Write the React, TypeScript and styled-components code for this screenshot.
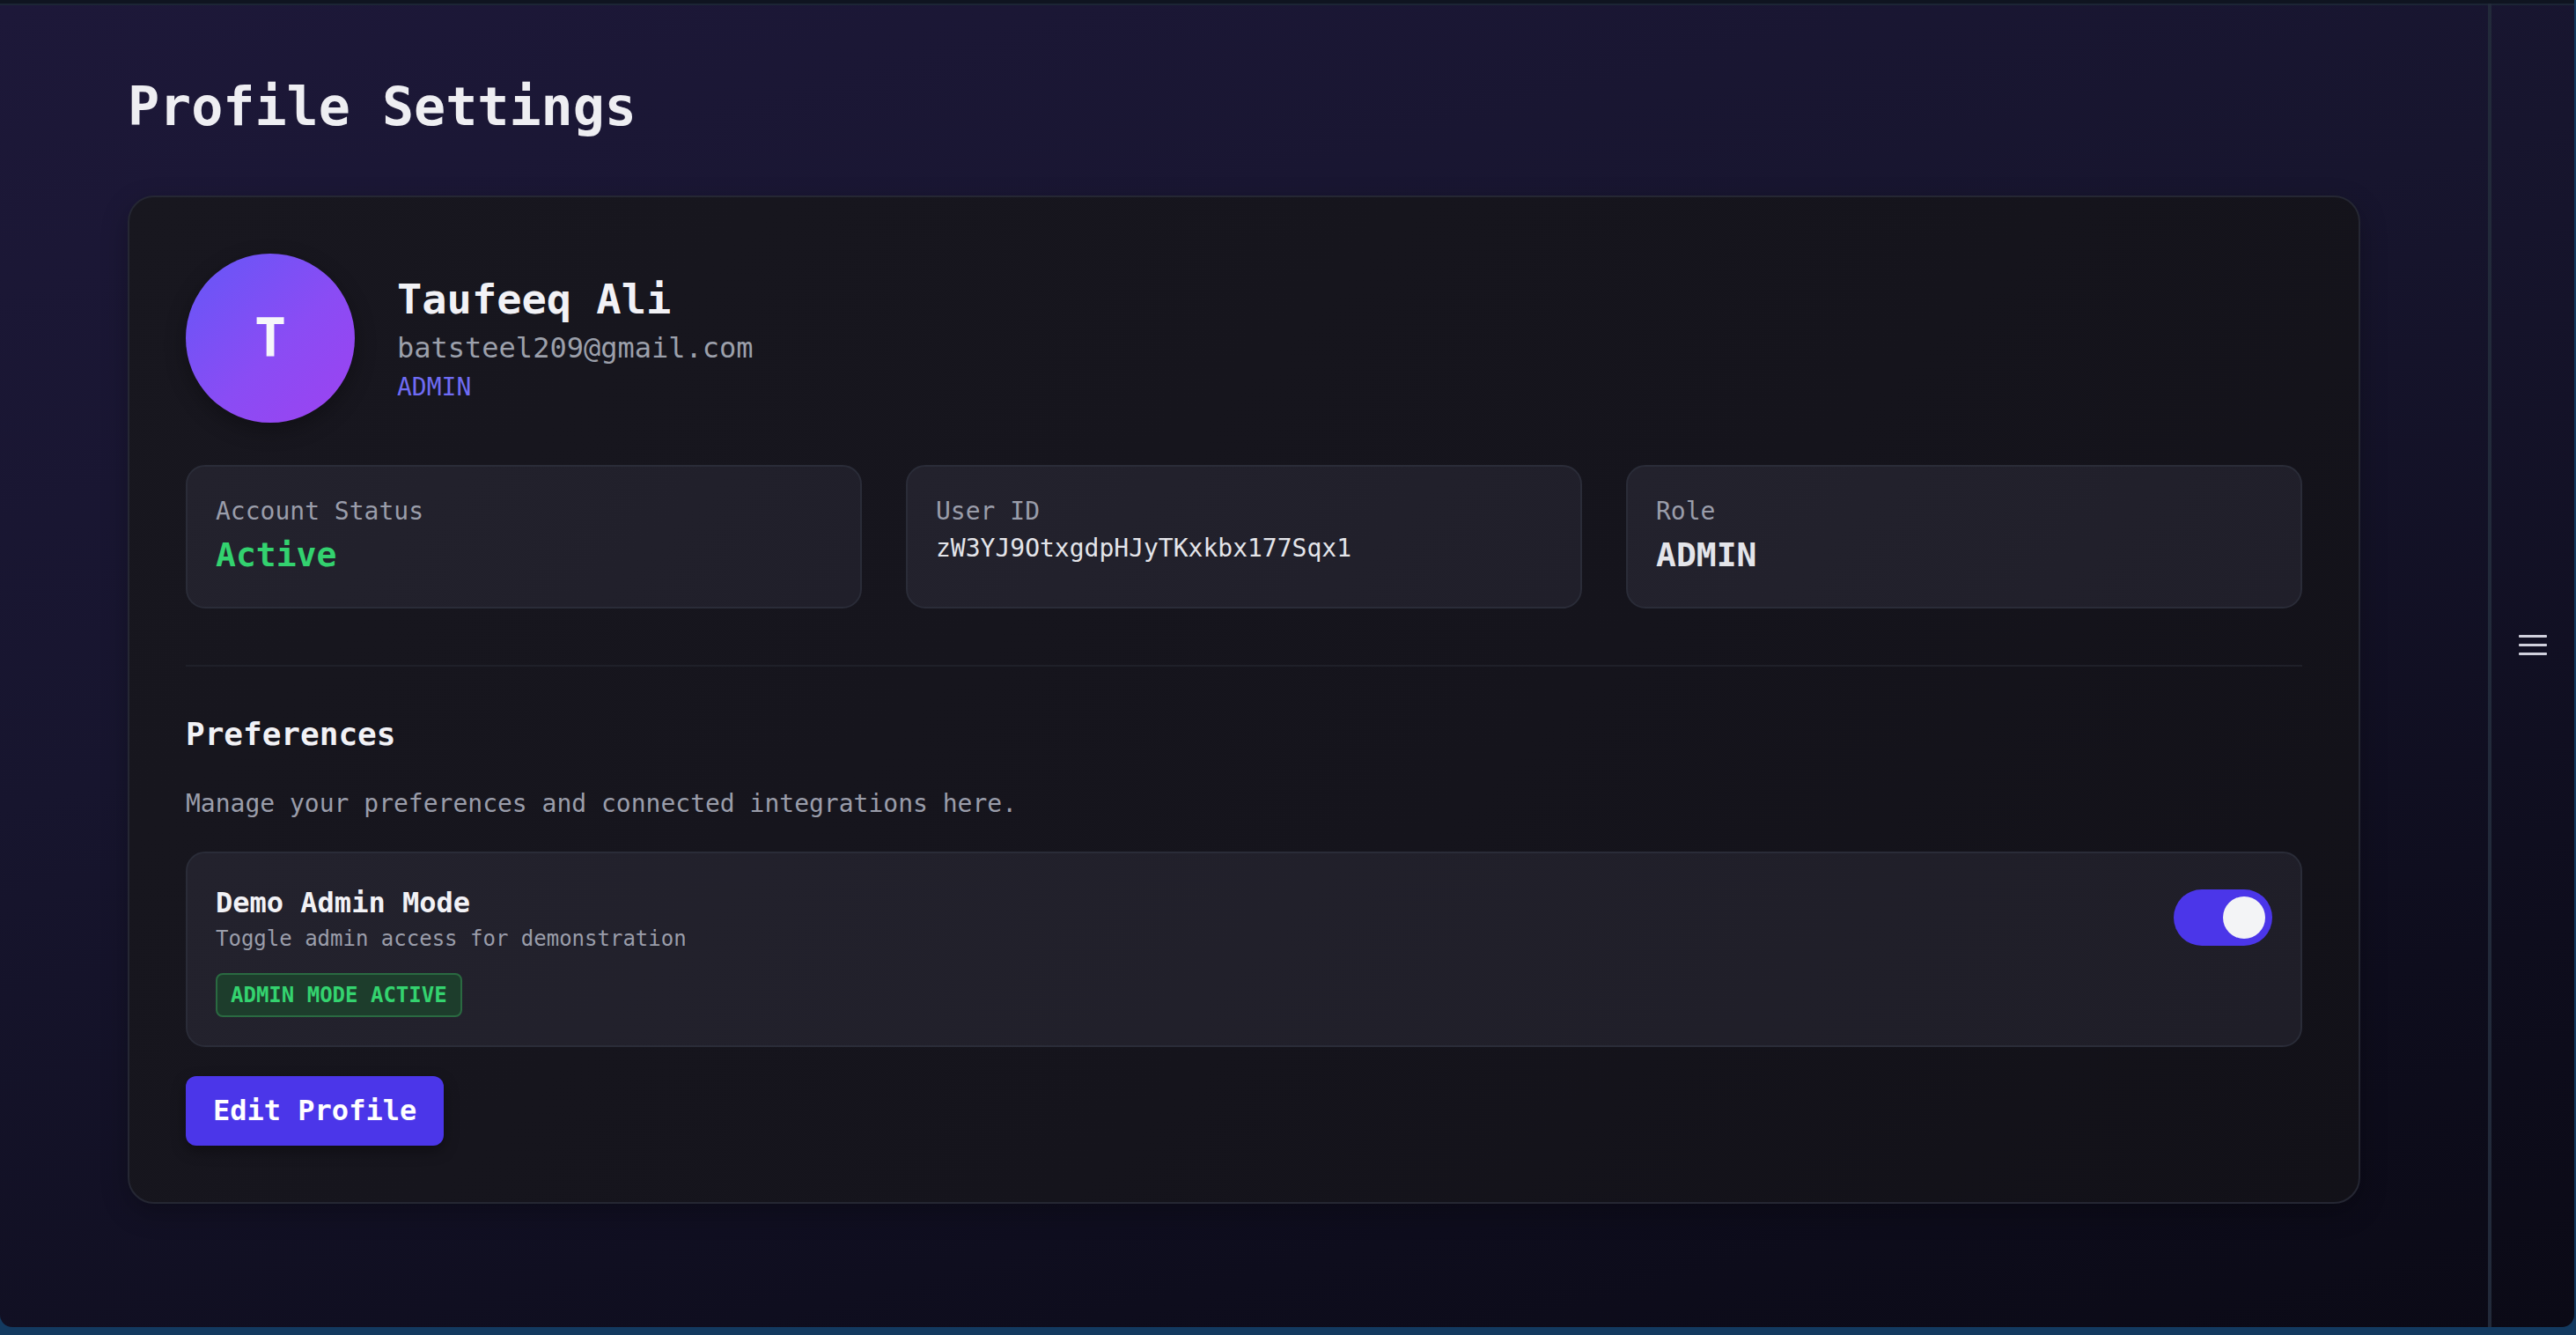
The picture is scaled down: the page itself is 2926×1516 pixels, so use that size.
import React, { useState } from 'react'
import styled, { createGlobalStyle } from 'styled-components'

const GlobalStyle = createGlobalStyle`
  html, body {
    margin: 0;
    padding: 0;
    background: #133a60;
  }
  body {
    font-family: "DejaVu Sans Mono", "Liberation Mono", monospace;
    color: #e5e7eb;
  }
  * {
    box-sizing: border-box;
  }
`

const Shell = styled.div`
  display: flex;
  width: calc(100% - 2px);
  height: 1507px;
  border-top: 4px solid #0f1420;
  border-radius: 0 0 14px 14px;
  overflow: hidden;
  background: linear-gradient(165deg, #1d1839 0%, #17152e 40%, #0e0d1d 80%, #0b0a16 100%);
  box-shadow: inset 0 2px 0 #1c2535;
`

const Main = styled.main`
  flex: 1;
  padding: 81px 145px 0;
`

const PageTitle = styled.h1`
  margin: 0 0 65px;
  font-size: 60px;
  line-height: 1.2;
  font-weight: 700;
  color: #eeeef2;
`

const Card = styled.section`
  padding: 64px;
  border: 2px solid #252733;
  border-radius: 30px;
  background: linear-gradient(135deg, #18171f 0%, #15141c 60%, #121118 100%);
  box-shadow: 0 10px 30px rgba(0, 0, 0, 0.25);
`

const ProfileHeader = styled.div`
  display: flex;
  align-items: center;
  gap: 48px;
`

const Avatar = styled.div`
  width: 192px;
  height: 192px;
  border-radius: 50%;
  display: flex;
  align-items: center;
  justify-content: center;
  background: linear-gradient(135deg, #6457f7 0%, #8a4cf4 55%, #9d42f0 100%);
  color: #f6f6fa;
  font-size: 60px;
  font-weight: 700;
  box-shadow: 0 8px 24px rgba(0, 0, 0, 0.3);
`

const NameBlock = styled.div`
  display: flex;
  flex-direction: column;
  padding-top: 4px;
`

const Name = styled.div`
  font-size: 47px;
  line-height: 1.22;
  font-weight: 700;
  color: #f2f2f6;
`

const Email = styled.div`
  margin-top: 2px;
  font-size: 32px;
  line-height: 1.5;
  color: #9ca0ab;
`

const RoleTag = styled.div`
  font-size: 28px;
  line-height: 1.5;
  color: #6f6cf3;
`

const InfoGrid = styled.div`
  display: grid;
  grid-template-columns: repeat(3, 1fr);
  gap: 50px;
  margin-top: 48px;
`

const InfoBox = styled.div`
  padding: 30px 32px;
  border: 2px solid #2a2c38;
  border-radius: 22px;
  background: linear-gradient(135deg, #23222d 0%, #201f2a 100%);
`

const InfoLabel = styled.div`
  font-size: 28px;
  line-height: 1.5;
  color: #9a9daa;
`

const InfoValue = styled.div<{ $tone?: 'green' | 'plain'; $big?: boolean }>`
  font-size: ${p => (p.$big ? '38px' : '28px')};
  line-height: ${p => (p.$big ? '57px' : '42px')};
  font-weight: ${p => (p.$big ? 700 : 400)};
  color: ${p => (p.$tone === 'green' ? '#33d26f' : '#e4e5ea')};
`

const Divider = styled.hr`
  margin: 64px 0 50px;
  border: none;
  height: 2px;
  background: #1f2029;
`

const SectionTitle = styled.h2`
  margin: 0;
  font-size: 36px;
  line-height: 54px;
  font-weight: 700;
  color: #f2f2f6;
`

const SectionText = styled.p`
  margin: 31px 0 0;
  font-size: 28px;
  line-height: 42px;
  color: #9a9daa;
`

const PrefCard = styled.div`
  margin-top: 33px;
  padding: 32px;
  border: 2px solid #2a2c38;
  border-radius: 22px;
  background: linear-gradient(135deg, #23222d 0%, #1f1e28 100%);
`

const PrefRow = styled.div`
  display: flex;
  align-items: center;
  justify-content: space-between;
`

const PrefTitle = styled.div`
  font-size: 32px;
  line-height: 48px;
  font-weight: 700;
  color: #f2f2f6;
`

const PrefDesc = styled.div`
  font-size: 24px;
  line-height: 34px;
  color: #9a9daa;
`

const Toggle = styled.button<{ $on: boolean }>`
  position: relative;
  width: 112px;
  height: 64px;
  padding: 0;
  border: none;
  border-radius: 32px;
  background: ${p => (p.$on ? '#4b36e9' : '#3a3b47')};
  cursor: pointer;

  &::after {
    content: '';
    position: absolute;
    top: 8px;
    left: ${p => (p.$on ? '56px' : '8px')};
    width: 48px;
    height: 48px;
    border-radius: 50%;
    background: #f3f4f6;
    transition: left 0.2s ease;
  }
`

const Badge = styled.span`
  display: inline-block;
  margin-top: 22px;
  padding: 8px 15px;
  border: 2px solid #2a6a41;
  border-radius: 8px;
  background: #1d3d2c;
  color: #34d36f;
  font-size: 24px;
  line-height: 30px;
  font-weight: 700;
`

const EditButton = styled.button`
  margin-top: 33px;
  padding: 16px 31px;
  border: none;
  border-radius: 12px;
  background: #4b36e9;
  color: #ffffff;
  font-family: inherit;
  font-size: 32px;
  line-height: 47px;
  font-weight: 700;
  cursor: pointer;
  box-shadow: 0 6px 16px rgba(0, 0, 0, 0.35);
`

const SideBar = styled.aside`
  width: 98px;
  flex-shrink: 0;
  border-left: 4px solid #222a3a;
  display: flex;
  align-items: center;
  justify-content: center;
  padding-bottom: 48px;
`

const MenuButton = styled.button`
  padding: 0;
  border: none;
  background: none;
  color: #d0d0dc;
  cursor: pointer;
  display: flex;
`

const MenuIcon = () => (
  <svg width="32" height="24" viewBox="0 0 32 24" fill="none">
    <rect x="0" y="1" width="32" height="3" rx="1" fill="currentColor" />
    <rect x="0" y="11" width="32" height="3" rx="1" fill="currentColor" />
    <rect x="0" y="21" width="32" height="3" rx="1" fill="currentColor" />
  </svg>
)

export default function App() {
  const [adminMode, setAdminMode] = useState(true)

  return (
    <>
      <GlobalStyle />
      <Shell>
        <Main>
          <PageTitle>Profile Settings</PageTitle>
          <Card>
            <ProfileHeader>
              <Avatar>T</Avatar>
              <NameBlock>
                <Name>Taufeeq Ali</Name>
                <Email>batsteel209@gmail.com</Email>
                <RoleTag>ADMIN</RoleTag>
              </NameBlock>
            </ProfileHeader>

            <InfoGrid>
              <InfoBox>
                <InfoLabel>Account Status</InfoLabel>
                <InfoValue $tone="green" $big>Active</InfoValue>
              </InfoBox>
              <InfoBox>
                <InfoLabel>User ID</InfoLabel>
                <InfoValue>zW3YJ9OtxgdpHJyTKxkbx177Sqx1</InfoValue>
              </InfoBox>
              <InfoBox>
                <InfoLabel>Role</InfoLabel>
                <InfoValue $big>ADMIN</InfoValue>
              </InfoBox>
            </InfoGrid>

            <Divider />

            <SectionTitle>Preferences</SectionTitle>
            <SectionText>Manage your preferences and connected integrations here.</SectionText>

            <PrefCard>
              <PrefRow>
                <div>
                  <PrefTitle>Demo Admin Mode</PrefTitle>
                  <PrefDesc>Toggle admin access for demonstration</PrefDesc>
                </div>
                <Toggle $on={adminMode} onClick={() => setAdminMode(!adminMode)} aria-label="Toggle admin mode" />
              </PrefRow>
              {adminMode && <Badge>ADMIN MODE ACTIVE</Badge>}
            </PrefCard>

            <EditButton>Edit Profile</EditButton>
          </Card>
        </Main>
        <SideBar>
          <MenuButton aria-label="Menu">
            <MenuIcon />
          </MenuButton>
        </SideBar>
      </Shell>
    </>
  )
}
